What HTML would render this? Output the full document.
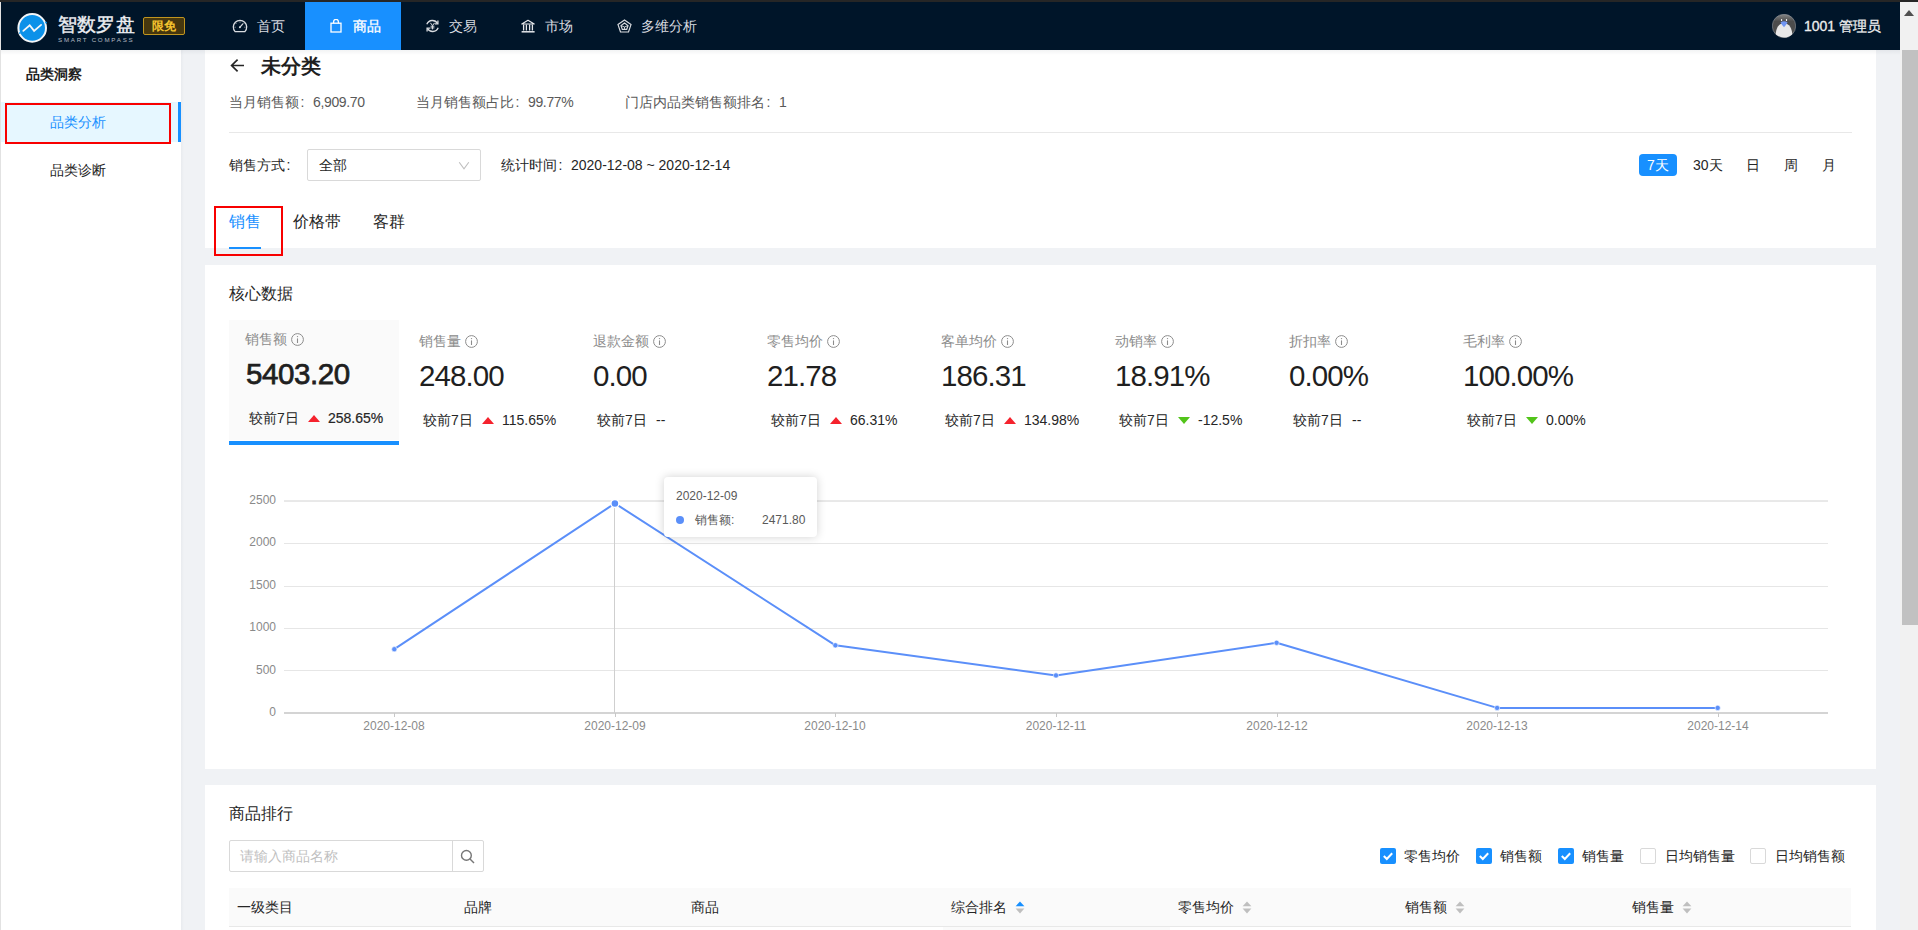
<!DOCTYPE html>
<html><head><meta charset="utf-8">
<style>
*{box-sizing:border-box;margin:0;padding:0}
html,body{width:1918px;height:930px;overflow:hidden;background:#f0f2f5;font-family:"Liberation Sans",sans-serif;color:#262626}
.a{position:absolute;white-space:nowrap;line-height:1}
.card{position:absolute;background:#fff}
.cl{display:inline-block;width:14px;padding-left:1.5px}
</style></head><body>
<!-- top strip & left border -->
<div class="a" style="left:0;top:0;width:1918px;height:2px;background:#262626"></div>
<div class="a" style="left:0;top:2px;width:1px;height:928px;background:#e2e2e2"></div>

<!-- NAV -->
<div class="a" id="nav" style="left:1px;top:2px;width:1899px;height:48px;background:#001529">
</div>
<!-- logo -->
<svg class="a" style="left:16px;top:12px" width="32" height="32" viewBox="0 0 32 32">
<circle cx="16.2" cy="15.9" r="13.8" fill="#0b91e9" stroke="#f4f6f8" stroke-width="2"/>
<path d="M29.4 10.2 L30.6 11.2 M3.2 21.4 L4.6 20.6" stroke="#0b91e9" stroke-width="1.6"/>
<polyline points="7.3,18.9 13.7,13.3 18.1,18.9 25.1,12.9" fill="none" stroke="#f4f6f8" stroke-width="1.8" stroke-linejoin="miter" stroke-linecap="round"/>
</svg>
<div class="a" style="left:58px;top:15px;font-size:19px;font-weight:500;color:#eceef2;letter-spacing:0.2px;-webkit-text-stroke:0.4px #eceef2">智数罗盘</div>
<div class="a" style="left:58px;top:37px;font-size:6.2px;color:#b4b9c1;letter-spacing:1.75px">SMART COMPASS</div>
<div class="a" style="left:143px;top:17px;width:42px;height:18px;border:1px solid #c0951f;background:#46370e;border-radius:2px"></div>
<div class="a" style="left:152px;top:20px;font-size:12px;font-weight:bold;color:#f6c42e">限免</div>
<!-- active tab -->
<div class="a" style="left:305px;top:2px;width:96px;height:48px;background:#1890ff"></div>
<!-- nav items -->
<div class="a" style="left:257px;top:19px;font-size:14px;color:#d9dce0">首页</div>
<div class="a" style="left:353px;top:19px;font-size:14px;color:#fff;-webkit-text-stroke:0.35px #fff">商品</div>
<div class="a" style="left:449px;top:19px;font-size:14px;color:#d9dce0">交易</div>
<div class="a" style="left:545px;top:19px;font-size:14px;color:#d9dce0">市场</div>
<div class="a" style="left:641px;top:19px;font-size:14px;color:#d9dce0">多维分析</div>
<!-- icons -->
<svg class="a" style="left:232px;top:19px" width="16" height="15" viewBox="0 0 16 15" fill="none" stroke="#d9dce0" stroke-width="1.3">
<path d="M3.1 12.6 A6.7 6.7 0 1 1 12.9 12.6 Z"/><path d="M8 8.2 L11 4.6" stroke-width="1.2"/><circle cx="7.9" cy="8.3" r="1" fill="#d9dce0" stroke="none"/>
<path d="M8 2.6 V3.5 M4 4.4 L4.6 5 M12 4.4 L11.4 5 M2.6 8.2 H3.5 M13.4 8.2 H12.5" stroke-width="0.9"/>
</svg>
<svg class="a" style="left:330px;top:19px" width="12" height="14" viewBox="0 0 12 14" fill="none" stroke="#fff" stroke-width="1.3">
<rect x="1" y="4.2" width="10" height="8.8"/><path d="M3.6 4.2 V2.8 A2.4 2.4 0 0 1 8.4 2.8 V4.2"/>
</svg>
<svg class="a" style="left:425px;top:19px" width="15" height="14" viewBox="0 0 15 14" fill="none" stroke="#d9dce0" stroke-width="1.3">
<path d="M12.6 4.6 A6 6 0 0 0 1.8 5.2"/><path d="M2.4 9.4 A6 6 0 0 0 13.2 8.8"/>
<path d="M12.9 1.6 V4.9 H9.8" /><path d="M2.1 12.4 V9.1 H5.2"/>
<path d="M5.4 3.8 L7.5 6.6 L9.6 3.8 M7.5 6.6 V10.4 M5.6 7.2 H9.4 M5.6 8.9 H9.4" stroke-width="1"/>
</svg>
<svg class="a" style="left:521px;top:19px" width="15" height="15" viewBox="0 0 15 15" fill="none" stroke="#e6e8eb" stroke-width="1.2">
<path d="M7 1.3 L13.2 5 H0.8 Z" stroke-linejoin="round"/><path d="M2.6 5.6 V11.6 M5.4 5.6 V11.6 M8.6 5.6 V11.6 M11.4 5.6 V11.6" stroke-width="1.3"/><path d="M0.6 12.8 H13.6" stroke-width="1.5"/>
</svg>
<svg class="a" style="left:617px;top:19px" width="15" height="14" viewBox="0 0 15 14" fill="none" stroke="#d9dce0" stroke-width="1.2">
<path d="M7.5 0.9 L14 5.6 L11.5 13 H3.5 L1 5.6 Z"/><path d="M7.5 4 L11 6.6 L9.7 10.4 H5.3 L4 6.6 Z"/><path d="M4 6.6 L7.5 8 L11 6.6 M7.5 8 V10.4" stroke-width="0.9"/>
</svg>
<!-- avatar -->
<svg class="a" style="left:1772px;top:14px" width="24" height="24" viewBox="0 0 24 24">
<defs><linearGradient id="hg" x1="0" y1="0" x2="0" y2="1"><stop offset="0" stop-color="#858585"/><stop offset="0.3" stop-color="#4c4c4c"/></linearGradient><clipPath id="pc"><circle cx="12" cy="12" r="11.5"/></clipPath></defs>
<circle cx="12" cy="12" r="11.7" fill="url(#hg)" stroke="#9aa0a8" stroke-width="0.5"/>
<path clip-path="url(#pc)" d="M3.6 24 C3.2 14.6 6.6 9.2 12 9.2 C17.4 9.2 20.8 14.6 20.4 24 Z" fill="#e8e8e8"/>
<path d="M8.5 8.4 Q12 6.2 15.6 8.4 Q14 11 12 13.2 Q10 11 8.5 8.4 Z" fill="#7196f2"/>
<ellipse cx="9.6" cy="6.1" rx="0.65" ry="1.1" fill="#fff"/><ellipse cx="14.5" cy="6.1" rx="0.65" ry="1.1" fill="#fff"/>
</svg>
<div class="a" style="left:1804px;top:19px;font-size:14px;color:#eeeeee;-webkit-text-stroke:0.3px #eeeeee">1001 管理员</div>

<!-- scrollbar -->
<div class="a" style="left:1900px;top:2px;width:18px;height:928px;background:#f1f1f1"></div>
<div class="a" style="left:1904px;top:10px;width:0;height:0;border-left:5px solid transparent;border-right:5px solid transparent;border-bottom:6px solid #505050"></div>
<div class="a" style="left:1902px;top:50px;width:16px;height:575px;background:#c1c1c1"></div>

<!-- SIDEBAR -->
<div class="a" style="left:1px;top:50px;width:180px;height:880px;background:#fff"></div>
<div class="a" style="left:26px;top:67px;font-size:14px;font-weight:bold;color:#1f1f1f">品类洞察</div>
<div class="a" style="left:1px;top:102px;width:177px;height:40px;background:#e6f7ff"></div>
<div class="a" style="left:178px;top:102px;width:3px;height:40px;background:#1890ff"></div>
<div class="a" style="left:50px;top:115px;font-size:14px;color:#1890ff">品类分析</div>
<div class="a" style="left:50px;top:163px;font-size:14px;color:#262626">品类诊断</div>
<div class="a" style="left:5px;top:103px;width:166px;height:41px;border:2px solid #f80000"></div>

<div class="a" style="left:181px;top:50px;width:3px;height:880px;background:linear-gradient(90deg,rgba(0,21,41,0.03),rgba(0,21,41,0))"></div>
<!-- CARD 1 -->
<div class="card" style="left:205px;top:50px;width:1671px;height:198px"></div>
<svg class="a" style="left:230px;top:58px" width="15" height="15" viewBox="0 0 15 15" fill="none" stroke="#262626" stroke-width="1.7">
<path d="M14 7.5 H2 M7.6 1.6 L1.6 7.5 L7.6 13.4"/>
</svg>
<div class="a" style="left:261px;top:56px;font-size:20px;font-weight:bold;color:#1f1f1f">未分类</div>
<div class="a" style="left:229px;top:95px;font-size:14px;color:#595959">当月销售额<span class="cl">:</span><span style="letter-spacing:-0.35px">6,909.70</span></div>
<div class="a" style="left:416px;top:95px;font-size:14px;color:#595959">当月销售额占比<span class="cl">:</span><span style="letter-spacing:-0.35px">99.77%</span></div>
<div class="a" style="left:625px;top:95px;font-size:14px;color:#595959">门店内品类销售额排名<span class="cl">:</span>1</div>
<div class="a" style="left:229px;top:132px;width:1623px;height:1px;background:#e8e8e8"></div>
<div class="a" style="left:229px;top:158px;font-size:14px;color:#262626">销售方式<span class="cl">:</span></div>
<div class="a" style="left:307px;top:149px;width:174px;height:32px;border:1px solid #d9d9d9;border-radius:2px"></div>
<div class="a" style="left:319px;top:158px;font-size:14px;color:#262626">全部</div>
<svg class="a" style="left:458px;top:161px" width="12" height="10" viewBox="0 0 12 10" fill="none" stroke="#bfbfbf" stroke-width="1.1"><path d="M1.2 1.2 L6 7.8 L10.8 1.2"/></svg>
<div class="a" style="left:501px;top:158px;font-size:14px;color:#262626">统计时间<span class="cl">:</span>2020-12-08 ~ 2020-12-14</div>
<div class="a" style="left:1639px;top:154px;width:38px;height:22px;background:#1890ff;border-radius:4px"></div>
<div class="a" style="left:1647px;top:158px;font-size:14px;color:#fff">7天</div>
<div class="a" style="left:1693px;top:158px;font-size:14px;color:#262626">30天</div>
<div class="a" style="left:1746px;top:158px;font-size:14px;color:#262626">日</div>
<div class="a" style="left:1784px;top:158px;font-size:14px;color:#262626">周</div>
<div class="a" style="left:1822px;top:158px;font-size:14px;color:#262626">月</div>
<div class="a" style="left:229px;top:214px;font-size:16px;color:#1890ff">销售</div>
<div class="a" style="left:293px;top:214px;font-size:16px;color:#262626">价格带</div>
<div class="a" style="left:373px;top:214px;font-size:16px;color:#262626">客群</div>
<div class="a" style="left:229px;top:247px;width:32px;height:2px;background:#1890ff"></div>
<div class="a" style="left:214px;top:206px;width:69px;height:50px;border:2px solid #f80000"></div>
<!-- CARD 2 -->
<div class="card" style="left:205px;top:265px;width:1671px;height:504px"></div>
<div class="a" style="left:229px;top:286px;font-size:16px;color:#262626">核心数据</div>
<div class="a" style="left:229px;top:320px;width:170px;height:120px;background:#fafafa"></div>
<div class="a" style="left:229px;top:441px;width:170px;height:4px;background:#1890ff"></div>
<div class="a" style="left:245px;top:332px;font-size:14px;color:#8c8c8c">销售额</div>
<svg class="a" style="left:291px;top:333px" width="13" height="13" viewBox="0 0 13 13" fill="none" stroke="#8c8c8c"><circle cx="6.5" cy="6.5" r="5.9" stroke-width="1"/><path d="M6.5 5.4 V10" stroke-width="1.1"/><circle cx="6.5" cy="3.6" r="0.7" fill="#8c8c8c" stroke="none"/></svg>
<div class="a" style="left:246px;top:359px;font-size:29.5px;font-weight:normal;letter-spacing:-0.4px;-webkit-text-stroke:0.75px #1f1f1f;color:#1f1f1f">5403.20</div>
<div class="a" style="left:249px;top:411px;font-size:14px;color:#262626">较前7日</div>
<div class="a" style="left:308px;top:415px;width:0;height:0;border-left:6px solid transparent;border-right:6px solid transparent;border-bottom:7px solid #f5222d"></div>
<div class="a" style="left:328px;top:411px;font-size:14px;font-weight:normal;color:#262626;-webkit-text-stroke:0.2px #262626">258.65%</div>
<div class="a" style="left:419px;top:334px;font-size:14px;color:#8c8c8c">销售量</div>
<svg class="a" style="left:465px;top:335px" width="13" height="13" viewBox="0 0 13 13" fill="none" stroke="#8c8c8c"><circle cx="6.5" cy="6.5" r="5.9" stroke-width="1"/><path d="M6.5 5.4 V10" stroke-width="1.1"/><circle cx="6.5" cy="3.6" r="0.7" fill="#8c8c8c" stroke="none"/></svg>
<div class="a" style="left:419px;top:361px;font-size:29.5px;font-weight:normal;letter-spacing:-0.9px;color:#1f1f1f">248.00</div>
<div class="a" style="left:423px;top:413px;font-size:14px;color:#262626">较前7日</div>
<div class="a" style="left:482px;top:417px;width:0;height:0;border-left:6px solid transparent;border-right:6px solid transparent;border-bottom:7px solid #f5222d"></div>
<div class="a" style="left:502px;top:413px;font-size:14px;font-weight:normal;color:#262626">115.65%</div>
<div class="a" style="left:593px;top:334px;font-size:14px;color:#8c8c8c">退款金额</div>
<svg class="a" style="left:653px;top:335px" width="13" height="13" viewBox="0 0 13 13" fill="none" stroke="#8c8c8c"><circle cx="6.5" cy="6.5" r="5.9" stroke-width="1"/><path d="M6.5 5.4 V10" stroke-width="1.1"/><circle cx="6.5" cy="3.6" r="0.7" fill="#8c8c8c" stroke="none"/></svg>
<div class="a" style="left:593px;top:361px;font-size:29.5px;font-weight:normal;letter-spacing:-0.9px;color:#1f1f1f">0.00</div>
<div class="a" style="left:597px;top:413px;font-size:14px;color:#262626">较前7日</div>
<div class="a" style="left:656px;top:413px;font-size:14px;color:#262626">--</div>
<div class="a" style="left:767px;top:334px;font-size:14px;color:#8c8c8c">零售均价</div>
<svg class="a" style="left:827px;top:335px" width="13" height="13" viewBox="0 0 13 13" fill="none" stroke="#8c8c8c"><circle cx="6.5" cy="6.5" r="5.9" stroke-width="1"/><path d="M6.5 5.4 V10" stroke-width="1.1"/><circle cx="6.5" cy="3.6" r="0.7" fill="#8c8c8c" stroke="none"/></svg>
<div class="a" style="left:767px;top:361px;font-size:29.5px;font-weight:normal;letter-spacing:-0.9px;color:#1f1f1f">21.78</div>
<div class="a" style="left:771px;top:413px;font-size:14px;color:#262626">较前7日</div>
<div class="a" style="left:830px;top:417px;width:0;height:0;border-left:6px solid transparent;border-right:6px solid transparent;border-bottom:7px solid #f5222d"></div>
<div class="a" style="left:850px;top:413px;font-size:14px;font-weight:normal;color:#262626">66.31%</div>
<div class="a" style="left:941px;top:334px;font-size:14px;color:#8c8c8c">客单均价</div>
<svg class="a" style="left:1001px;top:335px" width="13" height="13" viewBox="0 0 13 13" fill="none" stroke="#8c8c8c"><circle cx="6.5" cy="6.5" r="5.9" stroke-width="1"/><path d="M6.5 5.4 V10" stroke-width="1.1"/><circle cx="6.5" cy="3.6" r="0.7" fill="#8c8c8c" stroke="none"/></svg>
<div class="a" style="left:941px;top:361px;font-size:29.5px;font-weight:normal;letter-spacing:-0.9px;color:#1f1f1f">186.31</div>
<div class="a" style="left:945px;top:413px;font-size:14px;color:#262626">较前7日</div>
<div class="a" style="left:1004px;top:417px;width:0;height:0;border-left:6px solid transparent;border-right:6px solid transparent;border-bottom:7px solid #f5222d"></div>
<div class="a" style="left:1024px;top:413px;font-size:14px;font-weight:normal;color:#262626">134.98%</div>
<div class="a" style="left:1115px;top:334px;font-size:14px;color:#8c8c8c">动销率</div>
<svg class="a" style="left:1161px;top:335px" width="13" height="13" viewBox="0 0 13 13" fill="none" stroke="#8c8c8c"><circle cx="6.5" cy="6.5" r="5.9" stroke-width="1"/><path d="M6.5 5.4 V10" stroke-width="1.1"/><circle cx="6.5" cy="3.6" r="0.7" fill="#8c8c8c" stroke="none"/></svg>
<div class="a" style="left:1115px;top:361px;font-size:29.5px;font-weight:normal;letter-spacing:-0.9px;color:#1f1f1f">18.91%</div>
<div class="a" style="left:1119px;top:413px;font-size:14px;color:#262626">较前7日</div>
<div class="a" style="left:1178px;top:417px;width:0;height:0;border-left:6px solid transparent;border-right:6px solid transparent;border-top:7px solid #52c41a"></div>
<div class="a" style="left:1198px;top:413px;font-size:14px;font-weight:normal;color:#262626">-12.5%</div>
<div class="a" style="left:1289px;top:334px;font-size:14px;color:#8c8c8c">折扣率</div>
<svg class="a" style="left:1335px;top:335px" width="13" height="13" viewBox="0 0 13 13" fill="none" stroke="#8c8c8c"><circle cx="6.5" cy="6.5" r="5.9" stroke-width="1"/><path d="M6.5 5.4 V10" stroke-width="1.1"/><circle cx="6.5" cy="3.6" r="0.7" fill="#8c8c8c" stroke="none"/></svg>
<div class="a" style="left:1289px;top:361px;font-size:29.5px;font-weight:normal;letter-spacing:-0.9px;color:#1f1f1f">0.00%</div>
<div class="a" style="left:1293px;top:413px;font-size:14px;color:#262626">较前7日</div>
<div class="a" style="left:1352px;top:413px;font-size:14px;color:#262626">--</div>
<div class="a" style="left:1463px;top:334px;font-size:14px;color:#8c8c8c">毛利率</div>
<svg class="a" style="left:1509px;top:335px" width="13" height="13" viewBox="0 0 13 13" fill="none" stroke="#8c8c8c"><circle cx="6.5" cy="6.5" r="5.9" stroke-width="1"/><path d="M6.5 5.4 V10" stroke-width="1.1"/><circle cx="6.5" cy="3.6" r="0.7" fill="#8c8c8c" stroke="none"/></svg>
<div class="a" style="left:1463px;top:361px;font-size:29.5px;font-weight:normal;letter-spacing:-0.9px;color:#1f1f1f">100.00%</div>
<div class="a" style="left:1467px;top:413px;font-size:14px;color:#262626">较前7日</div>
<div class="a" style="left:1526px;top:417px;width:0;height:0;border-left:6px solid transparent;border-right:6px solid transparent;border-top:7px solid #52c41a"></div>
<div class="a" style="left:1546px;top:413px;font-size:14px;font-weight:normal;color:#262626">0.00%</div>
<svg class="a" style="left:0;top:0" width="1918" height="930" viewBox="0 0 1918 930">
<line x1="284" y1="501" x2="1828" y2="501" stroke="#d2d2d2" stroke-width="1"/>
<line x1="284" y1="543.5" x2="1828" y2="543.5" stroke="#e6e6e6" stroke-width="1"/>
<line x1="284" y1="586.5" x2="1828" y2="586.5" stroke="#e6e6e6" stroke-width="1"/>
<line x1="284" y1="628.5" x2="1828" y2="628.5" stroke="#e6e6e6" stroke-width="1"/>
<line x1="284" y1="670.5" x2="1828" y2="670.5" stroke="#e6e6e6" stroke-width="1"/>
<line x1="284" y1="713" x2="1828" y2="713" stroke="#d4d4d4" stroke-width="2"/>
<line x1="394.5" y1="713" x2="394.5" y2="717" stroke="#c8c8c8" stroke-width="1"/>
<line x1="615.5" y1="713" x2="615.5" y2="717" stroke="#c8c8c8" stroke-width="1"/>
<line x1="835.5" y1="713" x2="835.5" y2="717" stroke="#c8c8c8" stroke-width="1"/>
<line x1="1056.5" y1="713" x2="1056.5" y2="717" stroke="#c8c8c8" stroke-width="1"/>
<line x1="1277.5" y1="713" x2="1277.5" y2="717" stroke="#c8c8c8" stroke-width="1"/>
<line x1="1497.5" y1="713" x2="1497.5" y2="717" stroke="#c8c8c8" stroke-width="1"/>
<line x1="1718.5" y1="713" x2="1718.5" y2="717" stroke="#c8c8c8" stroke-width="1"/>
<line x1="614.5" y1="503" x2="614.5" y2="713" stroke="#cfcfcf" stroke-width="1"/>
<polyline points="394.3,649.2 614.9,503.4 835.4,645.3 1056.0,675.4 1276.6,642.8 1497.1,707.9 1717.7,707.9" fill="none" stroke="#5b8ff9" stroke-width="2" stroke-linejoin="round"/>
<circle cx="394.3" cy="649.2" r="2.6" fill="#5b8ff9" stroke="#fff" stroke-width="0.6"/>
<circle cx="614.9" cy="503.4" r="4" fill="#5b8ff9" stroke="#fff" stroke-width="1.5"/>
<circle cx="835.4" cy="645.3" r="2.6" fill="#5b8ff9" stroke="#fff" stroke-width="0.6"/>
<circle cx="1056.0" cy="675.4" r="2.6" fill="#5b8ff9" stroke="#fff" stroke-width="0.6"/>
<circle cx="1276.6" cy="642.8" r="2.6" fill="#5b8ff9" stroke="#fff" stroke-width="0.6"/>
<circle cx="1497.1" cy="707.9" r="2.6" fill="#5b8ff9" stroke="#fff" stroke-width="0.6"/>
<circle cx="1717.7" cy="707.9" r="2.6" fill="#5b8ff9" stroke="#fff" stroke-width="0.6"/>
</svg>
<div class="a" style="left:196px;width:80px;text-align:right;top:494px;font-size:12px;color:#8a8a8a">2500</div>
<div class="a" style="left:196px;width:80px;text-align:right;top:536px;font-size:12px;color:#8a8a8a">2000</div>
<div class="a" style="left:196px;width:80px;text-align:right;top:579px;font-size:12px;color:#8a8a8a">1500</div>
<div class="a" style="left:196px;width:80px;text-align:right;top:621px;font-size:12px;color:#8a8a8a">1000</div>
<div class="a" style="left:196px;width:80px;text-align:right;top:664px;font-size:12px;color:#8a8a8a">500</div>
<div class="a" style="left:196px;width:80px;text-align:right;top:706px;font-size:12px;color:#8a8a8a">0</div>
<div class="a" style="left:344px;width:100px;text-align:center;top:720px;font-size:12px;color:#8a8a8a">2020-12-08</div>
<div class="a" style="left:565px;width:100px;text-align:center;top:720px;font-size:12px;color:#8a8a8a">2020-12-09</div>
<div class="a" style="left:785px;width:100px;text-align:center;top:720px;font-size:12px;color:#8a8a8a">2020-12-10</div>
<div class="a" style="left:1006px;width:100px;text-align:center;top:720px;font-size:12px;color:#8a8a8a">2020-12-11</div>
<div class="a" style="left:1227px;width:100px;text-align:center;top:720px;font-size:12px;color:#8a8a8a">2020-12-12</div>
<div class="a" style="left:1447px;width:100px;text-align:center;top:720px;font-size:12px;color:#8a8a8a">2020-12-13</div>
<div class="a" style="left:1668px;width:100px;text-align:center;top:720px;font-size:12px;color:#8a8a8a">2020-12-14</div>
<div class="a" style="left:664px;top:477px;width:153px;height:60px;background:#fff;border-radius:4px;box-shadow:0 0 10px rgba(0,0,0,0.18)"></div>
<div class="a" style="left:676px;top:490px;font-size:12px;color:#595959">2020-12-09</div>
<div class="a" style="left:676px;top:516px;width:8px;height:8px;border-radius:50%;background:#5b8ff9"></div>
<div class="a" style="left:695px;top:514px;font-size:12px;color:#595959">销售额:</div>
<div class="a" style="left:762px;top:514px;font-size:12px;color:#595959">2471.80</div>
<!-- CARD 3 -->
<div class="card" style="left:205px;top:785px;width:1671px;height:145px"></div>
<div class="a" style="left:229px;top:806px;font-size:16px;color:#262626">商品排行</div>
<div class="a" style="left:229px;top:840px;width:255px;height:32px;border:1px solid #d9d9d9;border-radius:2px"></div>
<div class="a" style="left:452px;top:841px;width:1px;height:30px;background:#d9d9d9"></div>
<div class="a" style="left:240px;top:849px;font-size:14px;color:#bfbfbf">请输入商品名称</div>
<svg class="a" style="left:460px;top:849px" width="16" height="16" viewBox="0 0 16 16" fill="none" stroke="#767676" stroke-width="1.4"><circle cx="6.4" cy="6.4" r="4.9"/><path d="M10 10 L14 14"/></svg>
<div class="a" style="left:1380px;top:848px;width:16px;height:16px;background:#1890ff;border-radius:2px"></div>
<svg class="a" style="left:1380px;top:848px" width="16" height="16" viewBox="0 0 16 16" fill="none" stroke="#fff" stroke-width="2"><path d="M3.8 8 L6.8 11 L12.2 5.2"/></svg>
<div class="a" style="left:1404px;top:849px;font-size:14px;color:#262626">零售均价</div>
<div class="a" style="left:1476px;top:848px;width:16px;height:16px;background:#1890ff;border-radius:2px"></div>
<svg class="a" style="left:1476px;top:848px" width="16" height="16" viewBox="0 0 16 16" fill="none" stroke="#fff" stroke-width="2"><path d="M3.8 8 L6.8 11 L12.2 5.2"/></svg>
<div class="a" style="left:1500px;top:849px;font-size:14px;color:#262626">销售额</div>
<div class="a" style="left:1558px;top:848px;width:16px;height:16px;background:#1890ff;border-radius:2px"></div>
<svg class="a" style="left:1558px;top:848px" width="16" height="16" viewBox="0 0 16 16" fill="none" stroke="#fff" stroke-width="2"><path d="M3.8 8 L6.8 11 L12.2 5.2"/></svg>
<div class="a" style="left:1582px;top:849px;font-size:14px;color:#262626">销售量</div>
<div class="a" style="left:1640px;top:848px;width:16px;height:16px;border:1px solid #d9d9d9;border-radius:2px;background:#fff"></div>
<div class="a" style="left:1665px;top:849px;font-size:14px;color:#262626">日均销售量</div>
<div class="a" style="left:1750px;top:848px;width:16px;height:16px;border:1px solid #d9d9d9;border-radius:2px;background:#fff"></div>
<div class="a" style="left:1775px;top:849px;font-size:14px;color:#262626">日均销售额</div>
<div class="a" style="left:229px;top:888px;width:1622px;height:38px;background:#fafafa"></div>
<div class="a" style="left:229px;top:926px;width:1622px;height:1px;background:#e8e8e8"></div>
<div class="a" style="left:943px;top:927px;width:227px;height:3px;background:#fafafa"></div>
<div class="a" style="left:237px;top:900px;font-size:14px;font-weight:500;color:#262626">一级类目</div>
<div class="a" style="left:464px;top:900px;font-size:14px;font-weight:500;color:#262626">品牌</div>
<div class="a" style="left:691px;top:900px;font-size:14px;font-weight:500;color:#262626">商品</div>
<div class="a" style="left:951px;top:900px;font-size:14px;font-weight:500;color:#262626">综合排名</div>
<svg class="a" style="left:1015px;top:900px" width="10" height="15" viewBox="0 0 10 15"><path d="M0.6 6.3 L5 1.4 L9.4 6.3 Z" fill="#1890ff"/><path d="M0.6 8.5 L5 13.4 L9.4 8.5 Z" fill="#bfbfbf"/></svg>
<div class="a" style="left:1178px;top:900px;font-size:14px;font-weight:500;color:#262626">零售均价</div>
<svg class="a" style="left:1242px;top:900px" width="10" height="15" viewBox="0 0 10 15"><path d="M0.6 6.3 L5 1.4 L9.4 6.3 Z" fill="#bfbfbf"/><path d="M0.6 8.5 L5 13.4 L9.4 8.5 Z" fill="#bfbfbf"/></svg>
<div class="a" style="left:1405px;top:900px;font-size:14px;font-weight:500;color:#262626">销售额</div>
<svg class="a" style="left:1455px;top:900px" width="10" height="15" viewBox="0 0 10 15"><path d="M0.6 6.3 L5 1.4 L9.4 6.3 Z" fill="#bfbfbf"/><path d="M0.6 8.5 L5 13.4 L9.4 8.5 Z" fill="#bfbfbf"/></svg>
<div class="a" style="left:1632px;top:900px;font-size:14px;font-weight:500;color:#262626">销售量</div>
<svg class="a" style="left:1682px;top:900px" width="10" height="15" viewBox="0 0 10 15"><path d="M0.6 6.3 L5 1.4 L9.4 6.3 Z" fill="#bfbfbf"/><path d="M0.6 8.5 L5 13.4 L9.4 8.5 Z" fill="#bfbfbf"/></svg>

<!-- nav shadow -->
<div class="a" style="left:1px;top:50px;width:1899px;height:5px;background:linear-gradient(rgba(0,21,41,0.05),rgba(0,21,41,0))"></div>
</body></html>
